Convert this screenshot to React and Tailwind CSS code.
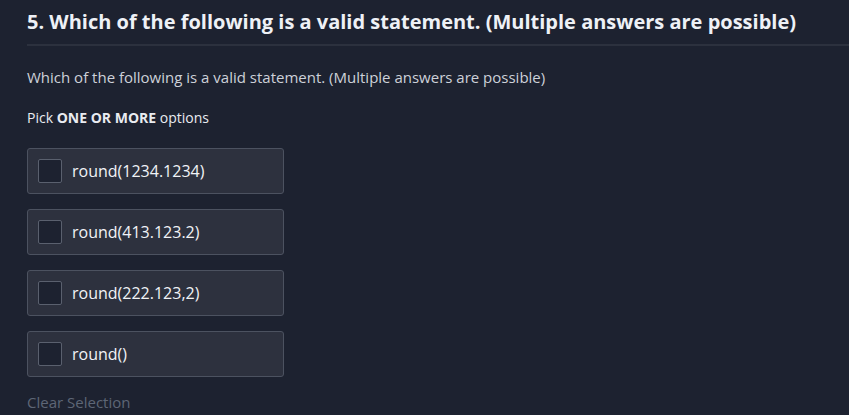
const options = ['round(1234.1234)', 'round(413.123.2)', 'round(222.123,2)', 'round()'];

export default function App() {
  return (
    <div className="min-h-[415px] w-full bg-[#1d2230] text-[#e5e7ec]" style={{ fontFamily: '"Open Sans", sans-serif' }}>
      <div className="pl-[27px]">
        <h1 className="pt-[7px] pb-[8px] text-[20px] leading-[29px] font-bold text-[#eef1f6]">
          5. Which of the following is a valid statement. (Multiple answers are possible)
        </h1>
        <div className="h-[2px] bg-[#2c313e]" />
        <p className="mt-[21px] text-[15px] leading-[21px] text-[#cdd1d9]">
          Which of the following is a valid statement. (Multiple answers are possible)
        </p>
        <p className="mt-[20px] text-[14px] leading-[20px] text-[#e9ecf1]">
          Pick <span className="font-bold">ONE OR MORE</span> options
        </p>
        <div className="mt-[20px] flex flex-col gap-[15px]">
          {options.map(o => (
            <label key={o} className="w-[257px] h-[46px] flex items-center gap-[10px] pl-[10px] rounded-[3px] border border-[#4c5260] bg-[#2d313e]">
              <span className="w-[24px] h-[24px] rounded-[2px] border border-[#5a606e] bg-[#1d2230] shrink-0" />
              <span className="text-[16px] text-[#f1f3f6]">{o}</span>
            </label>
          ))}
        </div>
        <div className="mt-[15px] text-[15px] leading-[20px] text-[#5d6676]">Clear Selection</div>
      </div>
    </div>
  );
}
